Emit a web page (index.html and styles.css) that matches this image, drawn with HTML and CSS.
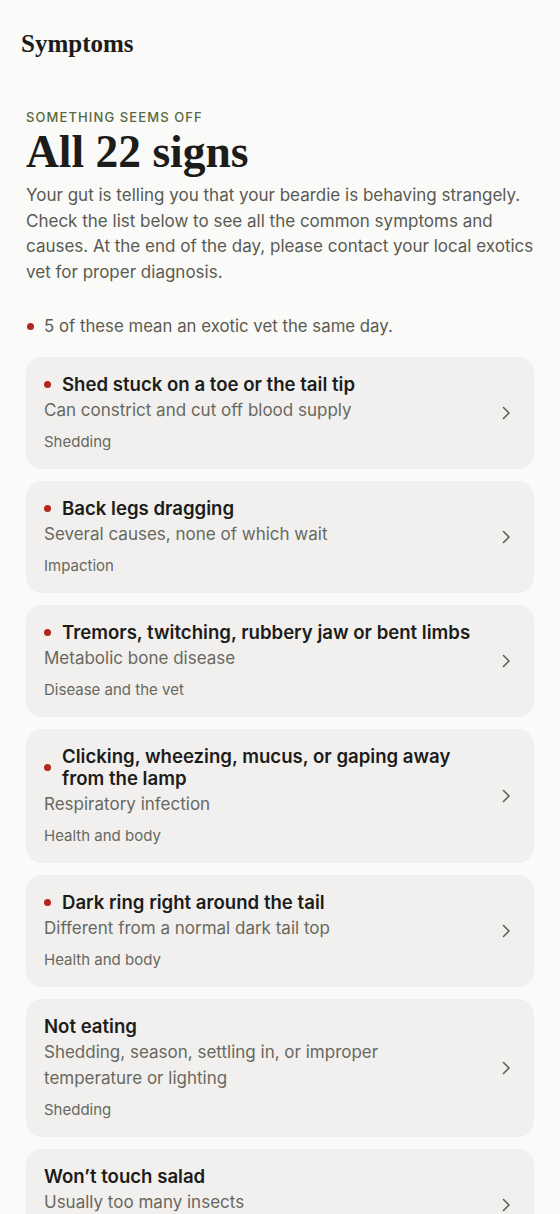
FILE: index.html
```html
<!DOCTYPE html>
<html lang="en">
<head>
    <meta charset="UTF-8">
    <meta name="viewport" content="width=device-width, initial-scale=1.0">
    <title>Symptoms</title>
    <link rel="stylesheet" href="styles.css">
</head>
<body>
    <header class="topbar">
        <h2>Symptoms</h2>
    </header>

    <main class="container">
        <div class="eyebrow">SOMETHING SEEMS OFF</div>
        <h1>All 22 signs</h1>
        <p class="intro">Your gut is telling you that your beardie is behaving strangely. Check the list below to see all the common symptoms and causes. At the end of the day, please contact your local exotics vet for proper diagnosis.</p>

        <div class="urgent-note"><span class="dot"></span>5 of these mean an exotic vet the same day.</div>

        <div class="symptom-list" id="list"></div>
    </main>

    <script>
        const symptoms = [
            { title: "Shed stuck on a toe or the tail tip", cause: "Can constrict and cut off blood supply", topic: "Shedding", urgent: true },
            { title: "Back legs dragging", cause: "Several causes, none of which wait", topic: "Impaction", urgent: true },
            { title: "Tremors, twitching, rubbery jaw or bent limbs", cause: "Metabolic bone disease", topic: "Disease and the vet", urgent: true },
            { title: "Clicking, wheezing, mucus, or gaping away from the lamp", cause: "Respiratory infection", topic: "Health and body", urgent: true },
            { title: "Dark ring right around the tail", cause: "Different from a normal dark tail top", topic: "Health and body", urgent: true },
            { title: "Not eating", cause: "Shedding, season, settling in, or improper temperature or lighting", topic: "Shedding", urgent: false },
            { title: "Won\u2019t touch salad", cause: "Usually too many insects", topic: "Diet", urgent: false }
        ];

        function renderList(items) {
            const list = document.getElementById('list');
            list.innerHTML = '';
            items.forEach(item => {
                const card = document.createElement('a');
                card.className = 'symptom';
                card.href = '#';
                card.innerHTML = `
                    <div class="symptom-body">
                        <div class="symptom-title">
                            ${item.urgent ? '<span class="dot"></span>' : ''}
                            <span>${item.title}</span>
                        </div>
                        <div class="symptom-cause">${item.cause}</div>
                        <div class="symptom-topic">${item.topic}</div>
                    </div>
                    <svg class="chevron" width="20" height="20" viewBox="0 0 20 20" fill="none">
                        <path d="M7.5 4.5 L13 10 L7.5 15.5" stroke="#5a5a54" stroke-width="1.5" stroke-linecap="round" stroke-linejoin="round"/>
                    </svg>
                `;
                list.appendChild(card);
            });
        }

        renderList(symptoms);
    </script>
</body>
</html>
```

FILE: styles.css
```css
body {
    font-family: Inter, "Noto Sans", sans-serif;
    margin: 0;
    padding: 0;
    background-color: #fafaf9;
    color: #1c1c1a;
}
.topbar {
    padding: 30px 21px 0;
}
.topbar h2 {
    margin: 0;
    font-family: "Liberation Serif", serif;
    font-size: 25px;
    line-height: 28px;
    font-weight: bold;
    color: #1c1c1a;
}
.container {
    padding: 50px 26px 20px;
}
.eyebrow {
    font-size: 13px;
    line-height: 18px;
    letter-spacing: 1.1px;
    font-weight: 500;
    color: #56683f;
}
h1 {
    margin: 2px 0 0;
    font-family: "Liberation Serif", serif;
    font-size: 45.5px;
    line-height: 48px;
    font-weight: bold;
    color: #1c1c1a;
}
.intro {
    margin: 7px 0 0;
    font-size: 17px;
    line-height: 25.5px;
    color: #5a5a52;
}
.urgent-note {
    display: flex;
    align-items: center;
    margin-top: 29px;
    font-size: 16.8px;
    line-height: 24px;
    color: #5a5a52;
}
.dot {
    flex: none;
    width: 7px;
    height: 7px;
    border-radius: 50%;
    background: #b3261e;
    margin: 0 10px 0 1px;
}
.symptom-list {
    display: flex;
    flex-direction: column;
    gap: 12px;
    margin-top: 19px;
}
.symptom {
    display: flex;
    align-items: center;
    gap: 20px;
    padding: 16px 18px;
    border-radius: 16px;
    background: #f1f0ee;
    text-decoration: none;
    color: inherit;
}
.symptom-body {
    flex: 1;
}
.symptom-title {
    display: flex;
    align-items: center;
    font-size: 18.6px;
    line-height: 22px;
    font-weight: 600;
    color: #1c1c1a;
}
.symptom-title .dot {
    margin: 0 11px 0 0;
}
.symptom-cause {
    margin-top: 2px;
    font-size: 17px;
    line-height: 26px;
    color: #686860;
}
.symptom-topic {
    margin-top: 8px;
    font-size: 15px;
    line-height: 22px;
    color: #686860;
}
.chevron {
    flex: none;
}
```
